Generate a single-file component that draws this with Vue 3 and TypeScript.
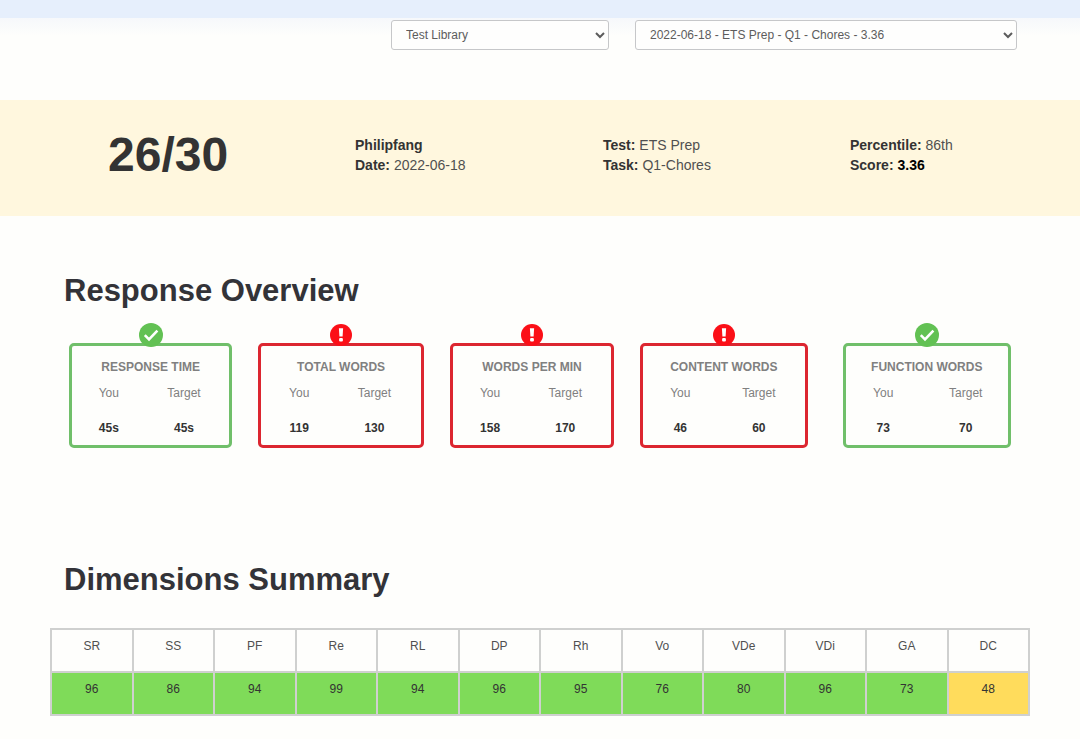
<script setup lang="ts">
import { ref } from 'vue'

interface Metric {
  title: string
  you: string
  target: string
  met: boolean
}

interface Dimension {
  code: string
  score: number
}

const library = ref('Test Library')
const response = ref('2022-06-18 - ETS Prep - Q1 - Chores - 3.36')

const metrics: Metric[] = [
  { title: 'RESPONSE TIME', you: '45s', target: '45s', met: true },
  { title: 'TOTAL WORDS', you: '119', target: '130', met: false },
  { title: 'WORDS PER MIN', you: '158', target: '170', met: false },
  { title: 'CONTENT WORDS', you: '46', target: '60', met: false },
  { title: 'FUNCTION WORDS', you: '73', target: '70', met: true },
]

const dimensions: Dimension[] = [
  { code: 'SR', score: 96 },
  { code: 'SS', score: 86 },
  { code: 'PF', score: 94 },
  { code: 'Re', score: 99 },
  { code: 'RL', score: 94 },
  { code: 'DP', score: 96 },
  { code: 'Rh', score: 95 },
  { code: 'Vo', score: 76 },
  { code: 'VDe', score: 80 },
  { code: 'VDi', score: 96 },
  { code: 'GA', score: 73 },
  { code: 'DC', score: 48 },
]
</script>

<template>
  <div class="page">
    <header class="topbar"></header>

    <form class="filters" @submit.prevent>
      <select v-model="library" class="picker picker-library" aria-label="Library">
        <option>Test Library</option>
      </select>
      <select v-model="response" class="picker picker-response" aria-label="Response">
        <option>2022-06-18 - ETS Prep - Q1 - Chores - 3.36</option>
      </select>
    </form>

    <section class="summary">
      <div class="total">26/30</div>
      <div>
        <p><b>Philipfang</b></p>
        <p><b>Date:</b> 2022-06-18</p>
      </div>
      <div>
        <p><b>Test:</b> ETS Prep</p>
        <p><b>Task:</b> Q1-Chores</p>
      </div>
      <div>
        <p><b>Percentile:</b> 86th</p>
        <p><b>Score:</b> <b class="score">3.36</b></p>
      </div>
    </section>

    <main class="content">
      <section class="overview">
        <h1>Response Overview</h1>
        <div class="cards">
          <article v-for="m in metrics" :key="m.title" class="card" :class="m.met ? 'met' : 'missed'">
            <svg v-if="m.met" class="badge" viewBox="0 0 24 24" aria-hidden="true">
              <circle cx="12" cy="12" r="12" fill="#62c153" />
              <path d="M5.8 12.2 10 16.4 18.4 7.6" fill="none" stroke="#fff" stroke-width="2.6" />
            </svg>
            <svg v-else class="badge" viewBox="0 0 24 24" aria-hidden="true">
              <circle cx="12" cy="12" r="11" fill="#fb0f17" />
              <path d="M9.9 5.2h4.2l-.5 8.4h-3.2z" fill="#fff" />
              <rect x="10.1" y="15" width="3.8" height="3.4" rx="1" fill="#fff" />
            </svg>
            <div class="figures">
              <h2>{{ m.title }}</h2>
              <div class="pair">
                <div class="figure">
                  <span class="label">You</span>
                  <strong>{{ m.you }}</strong>
                </div>
                <div class="figure">
                  <span class="label">Target</span>
                  <strong>{{ m.target }}</strong>
                </div>
              </div>
            </div>
          </article>
        </div>
      </section>

      <section>
        <h1>Dimensions Summary</h1>
        <table class="dimensions">
          <thead>
            <tr>
              <th v-for="d in dimensions" :key="d.code" scope="col">{{ d.code }}</th>
            </tr>
          </thead>
          <tbody>
            <tr>
              <td v-for="d in dimensions" :key="d.code" :class="d.score < 50 ? 'fair' : 'good'">{{ d.score }}</td>
            </tr>
          </tbody>
        </table>
      </section>
    </main>
  </div>
</template>

<style>
body {
  margin: 0;
  background: #fefefc;
}
</style>

<style scoped>
.page {
  font-family: "Liberation Sans", Arial, sans-serif;
  font-size: 14px;
  line-height: 20px;
  color: #333;
}

.topbar {
  height: 18px;
  background: #e6effc;
}

.filters {
  display: flex;
  justify-content: flex-end;
  gap: 26px;
  padding: 2px 63px 50px;
  background: linear-gradient(#f6f8fb, #fefefc 18px);
}

.picker {
  box-sizing: border-box;
  height: 30px;
  padding: 0 10px;
  border: 1px solid #c6c7c9;
  border-radius: 3px;
  background-color: #fefefd;
  font-family: inherit;
  font-size: 12px;
  color: #5c5c5c;
}

.picker-library {
  width: 218px;
}

.picker-response {
  width: 382px;
}

.summary {
  display: grid;
  grid-template-columns: 247fr 248fr 247fr 230fr;
  box-sizing: border-box;
  min-height: 116px;
  padding: 35px 0 40px 108px;
  background: #fff7de;
}

.summary p {
  margin: 0;
  color: #505050;
}

.summary b {
  color: #333;
}

.total {
  font-size: 48px;
  line-height: 40px;
  font-weight: bold;
}

.summary .score {
  color: #000;
}

.content {
  padding: 55px 50px 22px;
}

h1 {
  margin: 0;
  padding-left: 14px;
  font-size: 31px;
  line-height: 40px;
  font-weight: bold;
  color: #333338;
}

.overview {
  margin-bottom: 112px;
}

.cards {
  display: grid;
  grid-template-columns: 163fr 165fr 164fr 167fr 177fr;
  column-gap: 26px;
  padding: 32px 19px 0;
}

.card {
  position: relative;
  display: flex;
  justify-content: center;
  padding: 11px 0 7px;
  border: 3px solid;
  border-radius: 5px;
}

.card:last-child {
  margin-left: 9px;
}

.met {
  border-color: #70bf6a;
}

.missed {
  border-color: #dc2630;
}

.badge {
  position: absolute;
  top: -23px;
  left: 50%;
  width: 24px;
  height: 24px;
  margin-left: -12px;
}

.figures {
  min-width: 104px;
  font-size: 12px;
}

.figures h2 {
  margin: 0 0 6px;
  font-size: 12px;
  line-height: 20px;
  text-align: center;
  color: #808080;
}

.pair {
  display: flex;
  justify-content: space-between;
  padding-right: 2px;
}

.card:last-child .pair {
  padding: 0 0 0 2px;
}

.figure {
  display: flex;
  flex-direction: column;
  align-items: center;
  gap: 15px;
}

.label {
  color: #808080;
}

.dimensions {
  width: 100%;
  margin-top: 28px;
  border-collapse: collapse;
  table-layout: fixed;
  font-size: 12px;
}

.dimensions th,
.dimensions td {
  height: 26px;
  padding: 6px 0 9px;
  border: 2px solid #cfd0cf;
  font-weight: normal;
  text-align: center;
  vertical-align: top;
}

.dimensions th {
  color: #505050;
}

.dimensions .good {
  background: #7fdb59;
}

.dimensions .fair {
  background: #ffdc5c;
}
</style>
